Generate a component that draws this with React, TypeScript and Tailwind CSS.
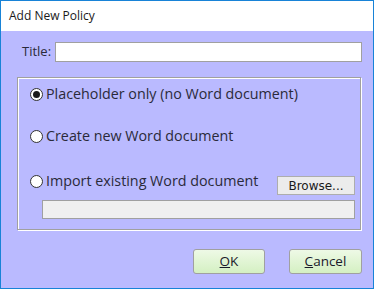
import React from "react";

function Radio({ checked }: { checked?: boolean }) {
  return (
    <svg width="13" height="13" viewBox="0 0 13 13" className="shrink-0">
      <circle cx="6.5" cy="6.5" r="6" fill="#ffffff" stroke="#333333" strokeWidth="1" />
      {checked && <circle cx="6.5" cy="6.5" r="3.5" fill="#1a1a1a" />}
    </svg>
  );
}

export default function App() {
  const font = { fontFamily: '"Open Sans", "Noto Sans", sans-serif' };
  return (
    <div
      className="w-[374px] h-[289px] border border-[#1883d7] flex flex-col bg-white text-[#1e1e2e]"
      style={font}
    >
      <div className="h-[30px] shrink-0 flex items-center pl-[8px] text-[12px] text-[#1a1a1a]">
        Add New Policy
      </div>
      <div className="flex-1 bg-[#babaff] flex flex-col">
        <div className="flex items-center mt-[11px] pl-[21px] pr-[11px] h-[20px]">
          <span className="text-[13px] text-[#2a2a3a] w-[28px]">Title:</span>
          <div className="ml-[5px] flex-1 h-[20px] bg-white border border-[#a0a0a0]" />
        </div>
        <div className="mt-[15px] ml-[16px] mr-[12px] h-[153px] border border-[#a0a0a0] shadow-[inset_1px_1px_0_#ffffff,1px_1px_0_#ffffff] flex flex-col pl-[12px] pr-[5px]">
          <div className="flex items-center gap-[3px] mt-[8px] h-[16px] text-[14.3px] text-[#2a2a3a]">
            <Radio checked />
            <span>Placeholder only (no Word document)</span>
          </div>
          <div className="flex items-center gap-[3px] mt-[26px] h-[16px] text-[14.3px] text-[#2a2a3a]">
            <Radio />
            <span>Create new Word document</span>
          </div>
          <div className="flex items-start mt-[32px] h-[19px] text-[14.3px] text-[#2a2a3a]">
            <div className="flex items-center gap-[3px] h-[16px] mt-[-3px]">
              <Radio />
              <span>Import existing Word document</span>
            </div>
            <div
              className="ml-auto w-[78px] h-[19px] bg-[#ececec] border border-[#adadad] flex items-center justify-center text-[12px] text-[#1a1a1a]"
              style={{ fontFamily: '"DejaVu Sans", sans-serif' }}
            >
              Browse...
            </div>
          </div>
          <div className="mt-[5px] ml-[12px] h-[19px] bg-[#f0f0f0] border border-[#a0a0a0]" />
        </div>
        <div className="flex justify-end gap-[24px] mt-[19px] pr-[11px]">
          <div className="w-[72px] h-[25px] rounded-[3px] border border-[#a0a0a0] bg-gradient-to-b from-[#eef9e6] to-[#d4f0c2] flex items-center justify-center text-[13.5px] text-[#1a1a2a]">
            <span><span className="underline">O</span>K</span>
          </div>
          <div className="w-[73px] h-[25px] rounded-[3px] border border-[#a0a0a0] bg-gradient-to-b from-[#eef9e6] to-[#d4f0c2] flex items-center justify-center text-[13.5px] text-[#1a1a2a]">
            <span><span className="underline">C</span>ancel</span>
          </div>
        </div>
      </div>
    </div>
  );
}
